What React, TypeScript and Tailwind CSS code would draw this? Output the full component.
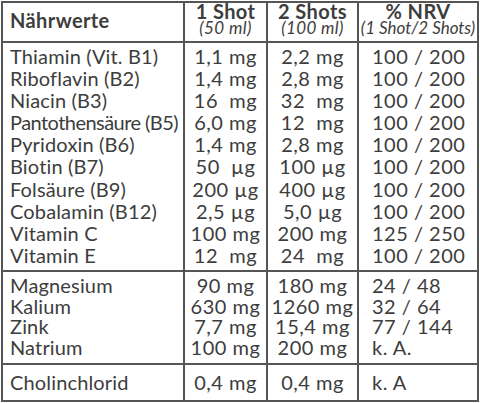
import React from "react";

type Row = [string, string, string, string];

const sec1: Row[] = [
  ["Thiamin (Vit. B1)", "1,1 mg", "2,2 mg", "100 / 200"],
  ["Riboflavin (B2)", "1,4 mg", "2,8 mg", "100 / 200"],
  ["Niacin (B3)", "16  mg", "32  mg", "100 / 200"],
  ["Pantothensäure (B5)", "6,0 mg", "12  mg", "100 / 200"],
  ["Pyridoxin (B6)", "1,4 mg", "2,8 mg", "100 / 200"],
  ["Biotin (B7)", "50  µg", "100 µg", "100 / 200"],
  ["Folsäure (B9)", "200 µg", "400 µg", "100 / 200"],
  ["Cobalamin (B12)", "2,5 µg", "5,0 µg", "100 / 200"],
  ["Vitamin C", "100 mg", "200 mg", "125 / 250"],
  ["Vitamin E", "12  mg", "24  mg", "100 / 200"],
];

const sec2: Row[] = [
  ["Magnesium", "90 mg", "180 mg", "24 / 48"],
  ["Kalium", "630 mg", "1260 mg", "32 / 64"],
  ["Zink", "7,7 mg", "15,4 mg", "77 / 144"],
  ["Natrium", "100 mg", "200 mg", "k. A."],
];

function Lines({ items, className }: { items: string[]; className: string }) {
  return (
    <div className={className}>
      {items.map((t, i) => (
        <div
          key={i}
          className={
            t === "Pantothensäure (B5)"
              ? "whitespace-pre tracking-[-0.55px]"
              : "whitespace-pre"
          }
        >
          {t}
        </div>
      ))}
    </div>
  );
}

function Head({ title, sub, last }: { title: string; sub: string; last?: boolean }) {
  return (
    <div
      className={
        last
          ? "border-b-2 border-[#555555] flex flex-col items-center"
          : "border-r-2 border-b-2 border-[#555555] flex flex-col items-center"
      }
    >
      <div className="text-[20px] font-bold leading-[16px] tracking-[0.4px] whitespace-nowrap">{title}</div>
      <div
        className={
          last
            ? "text-[17px] italic leading-[17px] whitespace-nowrap"
            : "text-[17px] italic leading-[17px] tracking-[0.4px] whitespace-nowrap"
        }
      >
        {sub}
      </div>
    </div>
  );
}

export default function App() {
  const col = (rows: Row[], i: number) => rows.map((r) => r[i]);
  return (
    <div className="bg-white w-[480px] h-[403px] pt-[1px] pl-[1px] font-[Lato]">
      <div className="w-[478px] h-[401px] border-2 border-[#555555] text-[#3d3d3d] grid grid-cols-[182px_83px_91px_118px] grid-rows-[40px_229px_93px_35px]">
        {/* header */}
        <div className="border-r-2 border-b-2 border-[#555555] flex items-center pl-[7px] pb-[4px] text-[20px] font-bold leading-none tracking-[0.4px]">
          Nährwerte
        </div>
        <Head title="1 Shot" sub="(50 ml)" />
        <Head title="2 Shots" sub="(100 ml)" />
        <Head title="% NRV" sub="(1 Shot/2 Shots)" last />

        {/* section 1 */}
        <Lines items={col(sec1, 0)} className="border-r-2 border-b-2 border-[#555555] pl-[7px] pt-[2px] text-[20px] leading-[22.1px] tracking-[0.15px]" />
        <Lines items={col(sec1, 1)} className="border-r-2 border-b-2 border-[#555555] text-center pt-[2px] text-[20px] leading-[22.1px] tracking-[0.5px]" />
        <Lines items={col(sec1, 2)} className="border-r-2 border-b-2 border-[#555555] text-center pt-[2px] text-[20px] leading-[22.1px] tracking-[0.5px]" />
        <Lines items={col(sec1, 3)} className="border-b-2 border-[#555555] pl-[13px] pt-[2px] text-[20px] leading-[22.1px] tracking-[0.5px]" />

        {/* section 2 */}
        <Lines items={col(sec2, 0)} className="border-r-2 border-b-2 border-[#555555] pl-[7px] pt-[3px] text-[20px] leading-[20.7px] tracking-[0.15px]" />
        <Lines items={col(sec2, 1)} className="border-r-2 border-b-2 border-[#555555] text-center pt-[3px] text-[20px] leading-[20.7px] tracking-[0.5px]" />
        <Lines items={col(sec2, 2)} className="border-r-2 border-b-2 border-[#555555] text-center pt-[3px] text-[20px] leading-[20.7px] tracking-[0.5px]" />
        <Lines items={col(sec2, 3)} className="border-b-2 border-[#555555] pl-[13px] pt-[3px] text-[20px] leading-[20.7px] tracking-[0.5px]" />

        {/* section 3 */}
        <div className="border-r-2 border-[#555555] flex items-center pl-[7px] pb-[2px] text-[20px] leading-none tracking-[0.15px]">Cholinchlorid</div>
        <div className="border-r-2 border-[#555555] flex items-center justify-center pb-[2px] text-[20px] leading-none tracking-[0.5px]">0,4 mg</div>
        <div className="border-r-2 border-[#555555] flex items-center justify-center pb-[2px] text-[20px] leading-none tracking-[0.5px]">0,4 mg</div>
        <div className="flex items-center pl-[13px] pb-[2px] text-[20px] leading-none tracking-[0.5px]">k. A</div>
      </div>
    </div>
  );
}
